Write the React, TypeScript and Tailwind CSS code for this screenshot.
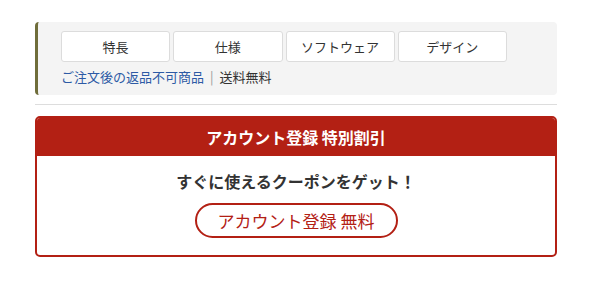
import React from "react";

export default function App() {
  const tabs = ["特長", "仕様", "ソフトウェア", "デザイン"];
  return (
    <div
      className="w-[600px] h-[291px] bg-white pt-[22px] pl-[35px]"
      style={{ fontFamily: '"Noto Sans CJK JP", "Noto Sans", sans-serif' }}
    >
      <div className="w-[522px]">
        <div className="bg-[#f4f4f4] rounded-[4px] border-l-[3px] border-[#6f6d3a] pl-[23px] pt-[9px] h-[73px]">
          <div className="grid grid-cols-4 gap-[3px] w-[446px]">
            {tabs.map((t) => (
              <div
                key={t}
                className="h-[31px] bg-white border border-[#dcdcdc] rounded-[3px] flex items-center justify-center text-[13px] text-[#333]"
              >
                {t}
              </div>
            ))}
          </div>
          <div className="mt-[6px] flex items-center text-[13px] leading-[18px]">
            <span className="text-[#2d5aa5]">ご注文後の返品不可商品</span>
            <span className="mx-[6px] text-[#999]">|</span>
            <span className="text-[#333]">送料無料</span>
          </div>
        </div>
        <div className="mt-[9px] h-px bg-[#dddddd]" />
        <div className="mt-[11px] border-2 border-[#b32014] rounded-[5px] overflow-hidden h-[141px]">
          <div className="bg-[#b32014] h-[38px] flex items-center justify-center text-white text-[16px] font-bold">
            アカウント登録 特別割引
          </div>
          <div className="flex flex-col items-center">
            <div className="mt-[14px] text-[16px] font-bold text-[#333] leading-[22px]">
              すぐに使えるクーポンをゲット！
            </div>
            <div className="mt-[11px] w-[203px] h-[35px] rounded-full border-2 border-[#b32014] flex items-center justify-center text-[#b32014] text-[17px]">
              アカウント登録 無料
            </div>
          </div>
        </div>
      </div>
    </div>
  );
}
